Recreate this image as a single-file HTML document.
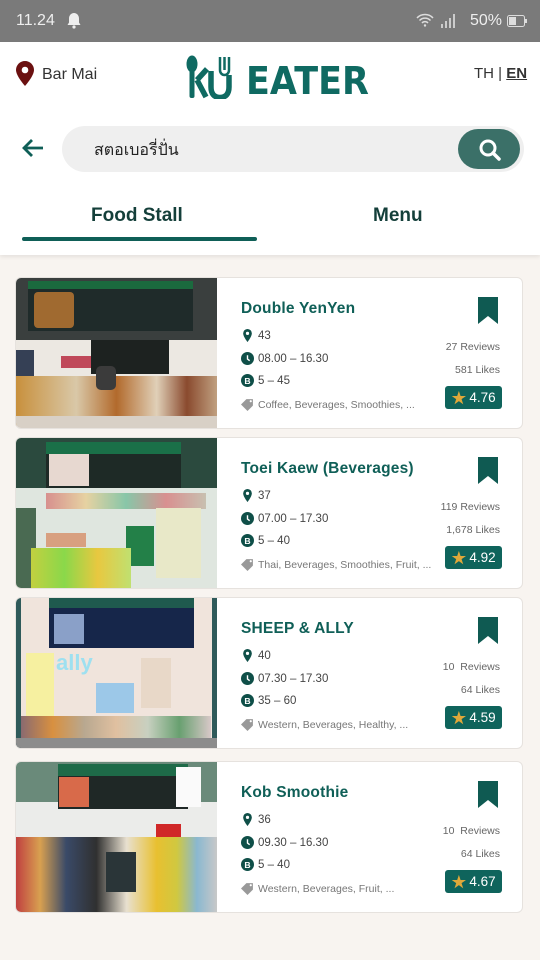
<!DOCTYPE html>
<html><head><meta charset="utf-8"><style>
*{margin:0;padding:0;box-sizing:border-box}
body{width:540px;height:960px;background:#f8f4f0;font-family:"Liberation Sans","Noto Sans CJK SC",sans-serif;position:relative;overflow:hidden}
.abs{position:absolute}
.status{left:0;top:0;width:540px;height:42px;background:#7a7a7a;color:#eee;font-size:16px}
.hdr{left:0;top:42px;width:540px;height:213px;background:#fff;box-shadow:0 2px 4px rgba(0,0,0,.08)}
.card{position:absolute;left:15px;width:508px;height:152px;background:#fff;border:1px solid #e6e2de;border-radius:6px;overflow:hidden}
.img{position:absolute;left:0;top:0;width:201px;height:100%;overflow:hidden}
.name{position:absolute;left:225px;top:22px;font-size:15.5px;font-weight:bold;color:#0f5f57;letter-spacing:.2px}
.row{position:absolute;left:225px;font-size:11.5px;color:#444;display:flex;align-items:center;gap:4px}
.row.tag{color:#777;font-size:10.5px}
.ic{width:13px;height:13px;display:inline-block}
.bm{position:absolute;left:461px;top:18px}
.rv{position:absolute;right:22px;font-size:10.5px;color:#666;text-align:right}
.rate{position:absolute;left:429px;width:57px;height:23px;background:#0f645c;border-radius:3px;color:#fff;font-size:13.5px;display:flex;align-items:center;justify-content:center;gap:3px}
.b{position:absolute}
</style></head><body>
<div class="abs status">
 <span class="abs" style="left:16px;top:12px">11.24</span>
 <svg class="abs" style="left:66px;top:12px" width="16" height="17" viewBox="0 0 16 17"><path d="M8 1c-3 0-5 2.5-5 5.5v4L1.5 13h13L13 10.5v-4C13 3.5 11 1 8 1z" fill="#eee"/><circle cx="8" cy="15" r="1.6" fill="#eee"/></svg>
 <svg class="abs" style="left:416px;top:13px" width="18" height="14" viewBox="0 0 18 14"><path d="M1 5a11 11 0 0 1 16 0M3.5 7.5a7.5 7.5 0 0 1 11 0M6 10a4 4 0 0 1 6 0" stroke="#ddd" stroke-width="1.5" fill="none"/><circle cx="9" cy="12.5" r="1.2" fill="#ddd"/></svg>
 <svg class="abs" style="left:440px;top:13px" width="16" height="15"><rect x="1" y="11" width="2" height="4" fill="#ccc"/><rect x="5" y="8" width="2" height="7" fill="#ccc"/><rect x="9" y="5" width="2" height="10" fill="#ccc"/><rect x="13" y="1" width="2" height="14" fill="#ccc"/></svg>
 <span class="abs" style="left:470px;top:12px;color:#eee">50%</span>
 <svg class="abs" style="left:507px;top:15px" width="20" height="12"><rect x=".5" y=".5" width="17" height="11" rx="2" stroke="#ddd" fill="none"/><rect x="2" y="2" width="7" height="8" fill="#ddd"/><rect x="18" y="4" width="2" height="4" fill="#ddd"/></svg>
</div>
<div class="abs hdr">
 <svg class="abs" style="left:16px;top:19px" width="18" height="25" viewBox="0 0 18 25"><path d="M9 0C4 0 0 4 0 9c0 6 9 16 9 16s9-10 9-16c0-5-4-9-9-9z" fill="#6b1010"/><circle cx="9" cy="9" r="3.3" fill="#fff"/></svg>
 <span class="abs" style="left:42px;top:24px;font-size:16px;color:#333">Bar Mai</span>
 <div class="abs" style="left:184px;top:13px;height:45px;width:185px">
  <svg class="abs" style="left:0;top:0" width="62" height="44" viewBox="0 0 62 44">
   <ellipse cx="8" cy="9" rx="5.5" ry="8.5" fill="#0f6a62"/><rect x="5.5" y="13" width="5" height="30" rx="2" fill="#0f6a62"/>
   <path d="M13 25 L23 14 M13 25 L22 42" stroke="#0f6a62" stroke-width="5.5" fill="none"/>
   <path d="M27 16v16c0 7 3.5 10.5 9 10.5s9-3.5 9-10.5V20" stroke="#0f6a62" stroke-width="5.5" fill="none"/>
   <path d="M36 2v13c0 3 2 5 4.5 5s4.5-2 4.5-5V2M40.5 2v13" stroke="#0f6a62" stroke-width="2.5" fill="none"/>
  </svg>
  <span class="abs" style="left:62px;top:4px;font-size:38px;font-weight:bold;color:#0f6a62;letter-spacing:0;font-family:'DejaVu Sans',sans-serif;transform:scaleX(.92);transform-origin:left">EATER</span>
 </div>
 <span class="abs" style="left:474px;top:23px;font-size:15px;color:#333">TH | <b style="text-decoration:underline">EN</b></span>
 <svg class="abs" style="left:21px;top:96px" width="24" height="20" viewBox="0 0 24 20"><path d="M22 10H3M11 2L3 10l8 8" stroke="#0f5f57" stroke-width="2.8" fill="none"/></svg>
 <div class="abs" style="left:62px;top:84px;width:462px;height:46px;background:#efefef;border-radius:23px"></div>
 <span class="abs" style="left:94px;top:96px;font-size:16px;color:#222;font-family:'Liberation Sans','Noto Sans CJK SC','WenQuanYi Zen Hei',sans-serif">สตอเบอรี่ปั่น</span>
 <div class="abs" style="left:458px;top:87px;width:62px;height:40px;background:#3b7068;border-radius:20px"></div>
 <svg class="abs" style="left:478px;top:96px" width="24" height="24" viewBox="0 0 24 24"><circle cx="10" cy="10" r="7" stroke="#fff" stroke-width="3" fill="none"/><path d="M15 15l6 6" stroke="#fff" stroke-width="3.5" stroke-linecap="round"/></svg>
 <span class="abs" style="left:91px;top:163px;font-size:19px;font-weight:bold;color:#143f3a">Food Stall</span>
 <span class="abs" style="left:373px;top:163px;font-size:19px;font-weight:bold;color:#143f3a">Menu</span>
 <div class="abs" style="left:22px;top:195px;width:235px;height:4px;background:#0f5f57;border-radius:2px"></div>
</div>

<!-- card 1 -->
<div class="card" style="top:277px">
 <div class="img" style="background:#ece8e2">
  <div class="b" style="left:0;top:0;width:201px;height:62px;background:#3a3f3e"></div>
  <div class="b" style="left:12px;top:3px;width:165px;height:50px;background:#1f2b2a;border-top:8px solid #1b6a3e"></div>
  <div class="b" style="left:18px;top:14px;width:40px;height:36px;background:#a06a30;border-radius:4px"></div>
  <div class="b" style="left:75px;top:62px;width:78px;height:34px;background:#1d2220"></div>
  <div class="b" style="left:45px;top:78px;width:30px;height:12px;background:#c0495a"></div>
  <div class="b" style="left:0;top:72px;width:18px;height:40px;background:#354055"></div>
  <div class="b" style="left:0;top:98px;width:201px;height:50px;background:linear-gradient(90deg,#c8903c,#d9c8a8 30%,#b26a2c 50%,#e0d0b8 70%,#8a4a2e 85%,#c0a080)"></div>
  <div class="b" style="left:80px;top:88px;width:20px;height:24px;background:#3b3b3b;border-radius:5px"></div>
  <div class="b" style="left:0;top:138px;width:201px;height:14px;background:#d8d0c6"></div>
 </div>
 <div class="name">Double YenYen</div>
 <div class="row" style="top:51px"><svg class="ic" viewBox="0 0 12 12"><path d="M6 0a4 4 0 0 0-4 4c0 3 4 8 4 8s4-5 4-8a4 4 0 0 0-4-4z" fill="#0f4f48"/><circle cx="6" cy="4" r="1.5" fill="#fff"/></svg>43</div>
 <div class="row" style="top:74px"><svg class="ic" viewBox="0 0 12 12"><circle cx="6" cy="6" r="6" fill="#0f4f48"/><path d="M6 3v3.5l2 1.5" stroke="#fff" stroke-width="1.3" fill="none"/></svg>08.00 – 16.30</div>
 <div class="row" style="top:96px"><svg class="ic" viewBox="0 0 12 12"><circle cx="6" cy="6" r="6" fill="#0f4f48"/><text x="6" y="9" font-size="8" font-weight="bold" fill="#fff" text-anchor="middle" font-family="Liberation Sans">B</text></svg>5 – 45</div>
 <div class="row tag" style="top:120px"><svg class="ic" viewBox="0 0 12 12"><path d="M0 6l5-5h6v6l-5 5z" fill="#999"/><circle cx="9" cy="3" r="1" fill="#fff"/></svg>Coffee, Beverages, Smoothies, ...</div>
 <svg class="bm" width="22" height="29" viewBox="0 0 22 29"><path d="M1 1h20v27l-10-8-10 8z" fill="#0f5a52"/></svg>
 <div class="rv" style="top:63px">27 Reviews</div>
 <div class="rv" style="top:86px">581 Likes</div>
 <div class="rate" style="top:108px"><span style="color:#e0a83a;font-size:15px">★</span>4.76</div>
</div>

<!-- card 2 -->
<div class="card" style="top:437px">
 <div class="img" style="background:#dfe6df">
  <div class="b" style="left:0;top:0;width:201px;height:50px;background:#2b4a3e"></div>
  <div class="b" style="left:30px;top:4px;width:135px;height:46px;background:#1e2a26;border-top:12px solid #1a7048"></div>
  <div class="b" style="left:33px;top:16px;width:40px;height:32px;background:#e7d8d0"></div>
  <div class="b" style="left:30px;top:55px;width:160px;height:16px;background:linear-gradient(90deg,#d7908e,#e6d2a2,#88c6a8,#d89090,#c8c0b0)"></div>
  <div class="b" style="left:140px;top:70px;width:45px;height:70px;background:#e8e8c8"></div>
  <div class="b" style="left:110px;top:88px;width:28px;height:40px;background:#238048"></div>
  <div class="b" style="left:0;top:70px;width:20px;height:80px;background:#4a6a52"></div>
  <div class="b" style="left:15px;top:110px;width:100px;height:40px;background:linear-gradient(90deg,#c2d040,#8ad84a,#e8c840,#c0e070)"></div>
  <div class="b" style="left:30px;top:95px;width:40px;height:14px;background:#d8a080"></div>
 </div>
 <div class="name">Toei Kaew (Beverages)</div>
 <div class="row" style="top:51px"><svg class="ic" viewBox="0 0 12 12"><path d="M6 0a4 4 0 0 0-4 4c0 3 4 8 4 8s4-5 4-8a4 4 0 0 0-4-4z" fill="#0f4f48"/><circle cx="6" cy="4" r="1.5" fill="#fff"/></svg>37</div>
 <div class="row" style="top:74px"><svg class="ic" viewBox="0 0 12 12"><circle cx="6" cy="6" r="6" fill="#0f4f48"/><path d="M6 3v3.5l2 1.5" stroke="#fff" stroke-width="1.3" fill="none"/></svg>07.00 – 17.30</div>
 <div class="row" style="top:96px"><svg class="ic" viewBox="0 0 12 12"><circle cx="6" cy="6" r="6" fill="#0f4f48"/><text x="6" y="9" font-size="8" font-weight="bold" fill="#fff" text-anchor="middle" font-family="Liberation Sans">B</text></svg>5 – 40</div>
 <div class="row tag" style="top:120px"><svg class="ic" viewBox="0 0 12 12"><path d="M0 6l5-5h6v6l-5 5z" fill="#999"/><circle cx="9" cy="3" r="1" fill="#fff"/></svg>Thai, Beverages, Smoothies, Fruit, ...</div>
 <svg class="bm" width="22" height="29" viewBox="0 0 22 29"><path d="M1 1h20v27l-10-8-10 8z" fill="#0f5a52"/></svg>
 <div class="rv" style="top:63px">119 Reviews</div>
 <div class="rv" style="top:86px">1,678 Likes</div>
 <div class="rate" style="top:108px"><span style="color:#e0a83a;font-size:15px">★</span>4.92</div>
</div>

<!-- card 3 -->
<div class="card" style="top:597px">
 <div class="img" style="background:#f0e4dc">
  <div class="b" style="left:0;top:0;width:201px;height:150px;border:5px solid #2f5a5a;border-top:0"></div>
  <div class="b" style="left:33px;top:0;width:145px;height:50px;background:#16264a;border-top:10px solid #1f5a4e"></div>
  <div class="b" style="left:38px;top:16px;width:30px;height:30px;background:#8aa0c8"></div>
  <div class="b" style="left:40px;top:52px;width:70px;height:20px;color:#9ee0f0;font:bold 22px 'Liberation Sans'">ally</div>
  <div class="b" style="left:10px;top:55px;width:28px;height:70px;background:#f6f0a0"></div>
  <div class="b" style="left:125px;top:60px;width:30px;height:50px;background:#e8d8c8"></div>
  <div class="b" style="left:80px;top:85px;width:38px;height:30px;background:#9cc8e8"></div>
  <div class="b" style="left:5px;top:118px;width:190px;height:24px;background:linear-gradient(90deg,#8a6a70,#d89040,#b8a890,#e0c0a0,#c8d0c0,#68a070,#d8c8c8)"></div>
  <div class="b" style="left:0;top:140px;width:201px;height:12px;background:#8c8c8c"></div>
 </div>
 <div class="name">SHEEP &amp; ALLY</div>
 <div class="row" style="top:51px"><svg class="ic" viewBox="0 0 12 12"><path d="M6 0a4 4 0 0 0-4 4c0 3 4 8 4 8s4-5 4-8a4 4 0 0 0-4-4z" fill="#0f4f48"/><circle cx="6" cy="4" r="1.5" fill="#fff"/></svg>40</div>
 <div class="row" style="top:74px"><svg class="ic" viewBox="0 0 12 12"><circle cx="6" cy="6" r="6" fill="#0f4f48"/><path d="M6 3v3.5l2 1.5" stroke="#fff" stroke-width="1.3" fill="none"/></svg>07.30 – 17.30</div>
 <div class="row" style="top:96px"><svg class="ic" viewBox="0 0 12 12"><circle cx="6" cy="6" r="6" fill="#0f4f48"/><text x="6" y="9" font-size="8" font-weight="bold" fill="#fff" text-anchor="middle" font-family="Liberation Sans">B</text></svg>35 – 60</div>
 <div class="row tag" style="top:120px"><svg class="ic" viewBox="0 0 12 12"><path d="M0 6l5-5h6v6l-5 5z" fill="#999"/><circle cx="9" cy="3" r="1" fill="#fff"/></svg>Western, Beverages, Healthy, ...</div>
 <svg class="bm" width="22" height="29" viewBox="0 0 22 29"><path d="M1 1h20v27l-10-8-10 8z" fill="#0f5a52"/></svg>
 <div class="rv" style="top:63px">10 &nbsp;Reviews</div>
 <div class="rv" style="top:86px">64 Likes</div>
 <div class="rate" style="top:108px"><span style="color:#e0a83a;font-size:15px">★</span>4.59</div>
</div>

<!-- card 4 -->
<div class="card" style="top:761px">
 <div class="img" style="background:#ebecea">
  <div class="b" style="left:0;top:0;width:201px;height:40px;background:#6a8a7a"></div>
  <div class="b" style="left:42px;top:2px;width:130px;height:45px;background:#1f2826;border-top:12px solid #1e6a48"></div>
  <div class="b" style="left:43px;top:15px;width:30px;height:30px;background:#d86a4a"></div>
  <div class="b" style="left:160px;top:5px;width:25px;height:40px;background:#fafafa"></div>
  <div class="b" style="left:140px;top:62px;width:25px;height:35px;background:#d02828"></div>
  <div class="b" style="left:0;top:75px;width:201px;height:77px;background:linear-gradient(90deg,#c04040,#d8a050 12%,#3a4a68 25%,#303030 40%,#e8e0d0 55%,#e8c030 70%,#d0c840 80%,#8ab8d0 90%,#c8c8c8)"></div>
  <div class="b" style="left:90px;top:90px;width:30px;height:40px;background:#2a3538"></div>
 </div>
 <div class="name">Kob Smoothie</div>
 <div class="row" style="top:51px"><svg class="ic" viewBox="0 0 12 12"><path d="M6 0a4 4 0 0 0-4 4c0 3 4 8 4 8s4-5 4-8a4 4 0 0 0-4-4z" fill="#0f4f48"/><circle cx="6" cy="4" r="1.5" fill="#fff"/></svg>36</div>
 <div class="row" style="top:74px"><svg class="ic" viewBox="0 0 12 12"><circle cx="6" cy="6" r="6" fill="#0f4f48"/><path d="M6 3v3.5l2 1.5" stroke="#fff" stroke-width="1.3" fill="none"/></svg>09.30 – 16.30</div>
 <div class="row" style="top:96px"><svg class="ic" viewBox="0 0 12 12"><circle cx="6" cy="6" r="6" fill="#0f4f48"/><text x="6" y="9" font-size="8" font-weight="bold" fill="#fff" text-anchor="middle" font-family="Liberation Sans">B</text></svg>5 – 40</div>
 <div class="row tag" style="top:120px"><svg class="ic" viewBox="0 0 12 12"><path d="M0 6l5-5h6v6l-5 5z" fill="#999"/><circle cx="9" cy="3" r="1" fill="#fff"/></svg>Western, Beverages, Fruit, ...</div>
 <svg class="bm" width="22" height="29" viewBox="0 0 22 29"><path d="M1 1h20v27l-10-8-10 8z" fill="#0f5a52"/></svg>
 <div class="rv" style="top:63px">10 &nbsp;Reviews</div>
 <div class="rv" style="top:86px">64 Likes</div>
 <div class="rate" style="top:108px"><span style="color:#e0a83a;font-size:15px">★</span>4.67</div>
</div>
</body></html>
